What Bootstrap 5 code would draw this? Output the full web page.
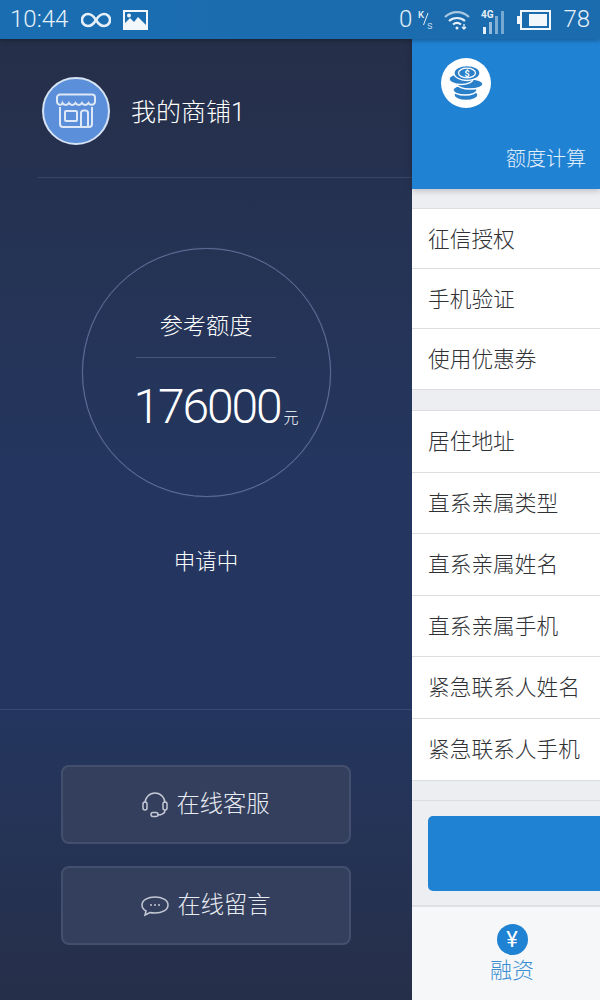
<!DOCTYPE html>
<html lang="zh-CN">
<head>
    <meta charset="UTF-8">
    <meta name="viewport" content="width=device-width, initial-scale=1.0">
    <title>我的商铺</title>
    <link href="https://cdn.jsdelivr.net/npm/bootstrap@5.3.0/dist/css/bootstrap.min.css" rel="stylesheet">
    <style>
        body {
            font-family: Roboto, "Noto Sans CJK SC", sans-serif;
            width: 600px;
            height: 1000px;
            overflow: hidden;
            background-color: #eceef2;
        }
        .status-bar {
            height: 39px;
            padding: 0 10px 0 10px;
            background: linear-gradient(90deg, #1a6db1, #1b6cae);
            color: #e6f0f8;
            font-weight: 300;
            box-shadow: 0 2px 4px rgba(0,0,0,.25);
            position: relative;
            z-index: 3;
        }
        .status-time { font-size: 24px; line-height: 39px; margin-right: 13px; }
        .status-num { font-size: 24px; line-height: 39px; }
        .speed { width: 16px; height: 22px; margin: 0 10px 0 6px; }
        .photo-icon { margin-left: 12px; }
        .signal-icon { margin-left: 11px; }
        .drawer-wrap { height: 961px; }
        .side-panel {
            width: 412px;
            flex: none;
            color: #fff;
            background: linear-gradient(180deg, #262f49 0, #24365f 45%, #24365f 70%, #262f49 100%);
        }
        .profile-row { height: 139px; margin-left: 38px; padding: 6px 0 0 4px; border-bottom: 1px solid #3a4563; }
        .shop-avatar { width: 68px; height: 68px; border: 2px solid #d5e2f4; background-color: #5b8fd9; }
        .shop-name { font-size: 25px; font-weight: 300; margin: 3px 0 0 21px; }
        .quota-area { height: 532px; padding-top: 70px; border-bottom: 1px solid #3a4a70; }
        .quota-ring { width: 249px; height: 249px; border: 1px solid #61709a; box-shadow: 0 0 1px #61709a; padding-top: 60px; }
        .quota-title { font-size: 23.200px; font-weight: 300; line-height: 34px; }
        .quota-line { width: 140px; height: 1px; background-color: #45557d; margin: 14px 0 15px; }
        .quota-value { font-size: 48px; font-weight: 300; line-height: 68px; margin-left: 20px; letter-spacing: -2.100px; white-space: nowrap; }
        .quota-unit { font-size: 15px; margin-left: 3px; font-weight: 300; letter-spacing: 0; }
        .apply-state { font-size: 21.500px; font-weight: 300; line-height: 34px; margin-top: 48px; }
        .panel-buttons { padding: 55px 61px 0; gap: 22px; }
        .service-btn {
            height: 79px;
            border: 2px solid #444f6e;
            border-radius: 8px;
            background-color: #343f5e;
            color: #e8ebf1;
            font-size: 23.300px;
            font-weight: 300;
            gap: 8px;
        }
        .form-panel { flex: 1; min-width: 0; }
        .form-panel > div { flex: none; }
        .calc-head {
            height: 150px;
            background-color: #2082d3;
            color: #e4f0fa;
            font-size: 20px;
            font-weight: 300;
            padding: 19px 14px 15px 29px;
            box-shadow: 0 2px 6px rgba(0,0,0,.2);
            position: relative;
        }
        .coin-badge { width: 50px; height: 50px; background-color: #fff; }
        .form-group-list { background-color: #fff; border-top: 1px solid #dcdde1; border-bottom: 1px solid #dcdde1; }
        .form-group-list > div {
            height: 60px;
            padding: 3px 0 0 16px;
            font-size: 21.700px;
            font-weight: 300;
            color: #2f3135;
            border-bottom: 1px solid #dcdde1;
            white-space: nowrap;
        }
        .form-group-list > div:last-child { border-bottom: 0; }
        .group-one { margin-top: 19px; }
        .group-two { margin-top: 20px; }
        .group-two > div { height: 61.500px; }
        .submit-area { margin-top: 19px; height: 107px; padding: 15px 0 15px 16px; border-top: 1px solid #dcdde1; border-bottom: 2px solid #dfe0e3; }
        .submit-block { height: 75px; background-color: #2082d3; border-radius: 5px 0 0 5px; }
        .tab-area { background-color: #f5f7f8; height: 93px; padding: 17px 0 0 12px; color: #3a8ed2; font-size: 22px; font-weight: 300; line-height: 28px; }
        .tab-label { margin-top: 2px; }
        .yen-dot { width: 31px; height: 31px; background-color: #2082d3; color: #fff; font-size: 22px; line-height: 31px; font-weight: 400; }
    </style>
</head>
<body>
    <div class="status-bar d-flex align-items-center">
        <span class="status-time">10:44</span>
        <!-- 无限 -->
        <svg width="30" height="16" viewBox="0 0 30 16" fill="none" stroke="#e6f0f8" stroke-width="2.600"><path d="M15 8C12 3 9.500 2 7 2a6 6 0 0 0 0 12c2.500 0 5-1 8-6s5.500-6 8-6a6 6 0 0 1 0 12c-2.500 0-5-1-8-6z"/></svg>
        <svg class="photo-icon" width="25" height="20" viewBox="0 0 25 20"><path fill="#f2f7fb" fill-rule="evenodd" d="M0 0h25v20H0zM2 2v11l5-5 4 4 4-5 8 8V2zM6 3.500a2 2 0 1 0 0 4 2 2 0 0 0 0-4z"/></svg>
        <span class="status-num ms-auto">0</span>
        <svg class="speed" viewBox="0 0 16 22"><text x="0" y="9" font-size="9.500" font-weight="500" fill="#e6f0f8">K</text><path d="M5.500 16L10 4" stroke="#e6f0f8" stroke-width="1"/><text x="9" y="20" font-size="11" fill="#e6f0f8">s</text></svg>
        <svg width="26" height="20" viewBox="0 0 26 20" fill="none" stroke="#e6f0f8" stroke-width="2.200"><path d="M1 7c7-6.500 17-6.500 24 0" opacity=".7"/><path d="M5 11c4.500-4 11.500-4 16 0"/><path d="M9 14.500c2.500-2 5.500-2 8 0"/><circle cx="13" cy="18" r="1.500" fill="#e6f0f8" stroke="none"/><path d="M20 14v4M18 17l2 2 2-2" stroke-width="1.300"/></svg>
        <svg class="signal-icon" width="28" height="28" viewBox="0 0 28 28"><g fill="#e6f0f8"><rect x="2" y="21" width="3" height="7"/><rect x="8" y="16" width="3" height="12" opacity=".6"/><rect x="14" y="10" width="3" height="18" opacity=".5"/><rect x="20" y="5" width="3" height="23" opacity=".45"/></g><text x="0" y="12" fill="#e6f0f8" font-size="10" font-weight="700">4G</text></svg>
        <svg class="ms-2" width="34" height="20" viewBox="0 0 34 20"><path fill="#f2f7fb" d="M0 6h3v8H0z"/><rect x="4" y="1" width="29" height="18" fill="none" stroke="#f2f7fb" stroke-width="2"/><rect x="12" y="4" width="18" height="12" fill="#f2f7fb"/></svg>
        <span class="status-num ms-2 ps-1">78</span>
    </div>

    <div class="drawer-wrap d-flex">
        <div class="side-panel d-flex flex-column">
            <div class="profile-row d-flex align-items-center">
                <div class="shop-avatar rounded-circle d-flex align-items-center justify-content-center">
                    <svg width="42" height="36" viewBox="0 0 42 36" fill="none" stroke="#dfe8f6" stroke-width="2"><path d="M5 1.500h32a3 3 0 0 1 3 3V9c-1 3.500-5 3.500-6.500 1-1.500 2.500-5 2.500-6.500 0-1.500 2.500-5 2.500-6.500 0-1.500 2.500-5 2.500-6.500 0-1.500 2.500-5 2.500-6.500 0C7 12.500 3 12.500 2 9V4.500a3 3 0 0 1 3-3z"/><path d="M5 14v17a3 3 0 0 0 3 3h26a3 3 0 0 0 3-3V14"/><rect x="10" y="18" width="12" height="10" rx="1"/><path d="M26 34V20a2.500 2.500 0 0 1 2.500-2.500h2A2.500 2.500 0 0 1 33 20v14"/></svg>
                </div>
                <span class="shop-name">我的商铺1</span>
            </div>
            <div class="quota-area d-flex flex-column align-items-center">
                <div class="quota-ring rounded-circle d-flex flex-column align-items-center">
                    <div class="quota-title">参考额度</div>
                    <div class="quota-line"></div>
                    <div class="quota-value">176000<span class="quota-unit">元</span></div>
                </div>
                <div class="apply-state">申请中</div>
            </div>
            <div class="panel-buttons d-flex flex-column">
                <div class="service-btn d-flex align-items-center justify-content-center">
                    <svg width="26" height="26" viewBox="0 0 26 26" fill="none" stroke="#c3c8d3" stroke-width="1.500"><path d="M3 11a10 10 0 0 1 20 0"/><rect x="1" y="10" width="4" height="8" rx="2"/><rect x="21" y="10" width="4" height="8" rx="2"/><path d="M23 18c0 3-3 5-8 5"/><rect x="9" y="20.500" width="7" height="4" rx="2"/></svg>
                    <span>在线客服</span>
                </div>
                <div class="service-btn d-flex align-items-center justify-content-center">
                    <svg width="28" height="22" viewBox="0 0 28 22" fill="none" stroke="#c3c8d3" stroke-width="1.500"><path d="M14 2c7 0 13 3 13 8s-6 8-13 8c-2 0-3.500 0-5-.5L4 20l1-4c-2.500-1.500-4-3.500-4-6 0-5 6-8 13-8z"/><g fill="#c3c8d3" stroke="none"><circle cx="10" cy="10" r="1"/><circle cx="14" cy="10" r="1"/><circle cx="18" cy="10" r="1"/></g></svg>
                    <span>在线留言</span>
                </div>
            </div>
        </div>

        <div class="form-panel d-flex flex-column">
            <div class="calc-head d-flex flex-column justify-content-between">
                <div class="coin-badge rounded-circle d-flex align-items-center justify-content-center">
                    <svg width="36" height="38" viewBox="0 0 36 38"><g stroke="#fff" stroke-width="1.300" fill="#2a7fc9"><ellipse cx="18" cy="31" rx="12" ry="5.500"/><ellipse cx="17" cy="26" rx="12" ry="5"/><ellipse cx="22" cy="20" rx="13" ry="5"/><ellipse cx="13" cy="15" rx="12" ry="5.500"/><ellipse cx="19" cy="9" rx="13" ry="7.500"/><ellipse cx="19" cy="9" rx="8.500" ry="4.800" fill="none"/></g><text x="19" y="12.500" text-anchor="middle" font-size="9" font-weight="700" fill="#fff">$</text></svg>
                </div>
                <div class="text-end">额度计算</div>
            </div>
            <div class="form-group-list group-one">
                <div class="d-flex align-items-center">征信授权</div>
                <div class="d-flex align-items-center">手机验证</div>
                <div class="d-flex align-items-center">使用优惠券</div>
            </div>
            <div class="form-group-list group-two">
                <div class="d-flex align-items-center">居住地址</div>
                <div class="d-flex align-items-center">直系亲属类型</div>
                <div class="d-flex align-items-center">直系亲属姓名</div>
                <div class="d-flex align-items-center">直系亲属手机</div>
                <div class="d-flex align-items-center">紧急联系人姓名</div>
                <div class="d-flex align-items-center">紧急联系人手机</div>
            </div>
            <div class="submit-area">
                <div class="submit-block"></div>
            </div>
            <div class="tab-area d-flex flex-column align-items-center">
                <div class="yen-dot rounded-circle text-center">¥</div>
                <div class="tab-label">融资</div>
            </div>
        </div>
    </div>
</body>
</html>
